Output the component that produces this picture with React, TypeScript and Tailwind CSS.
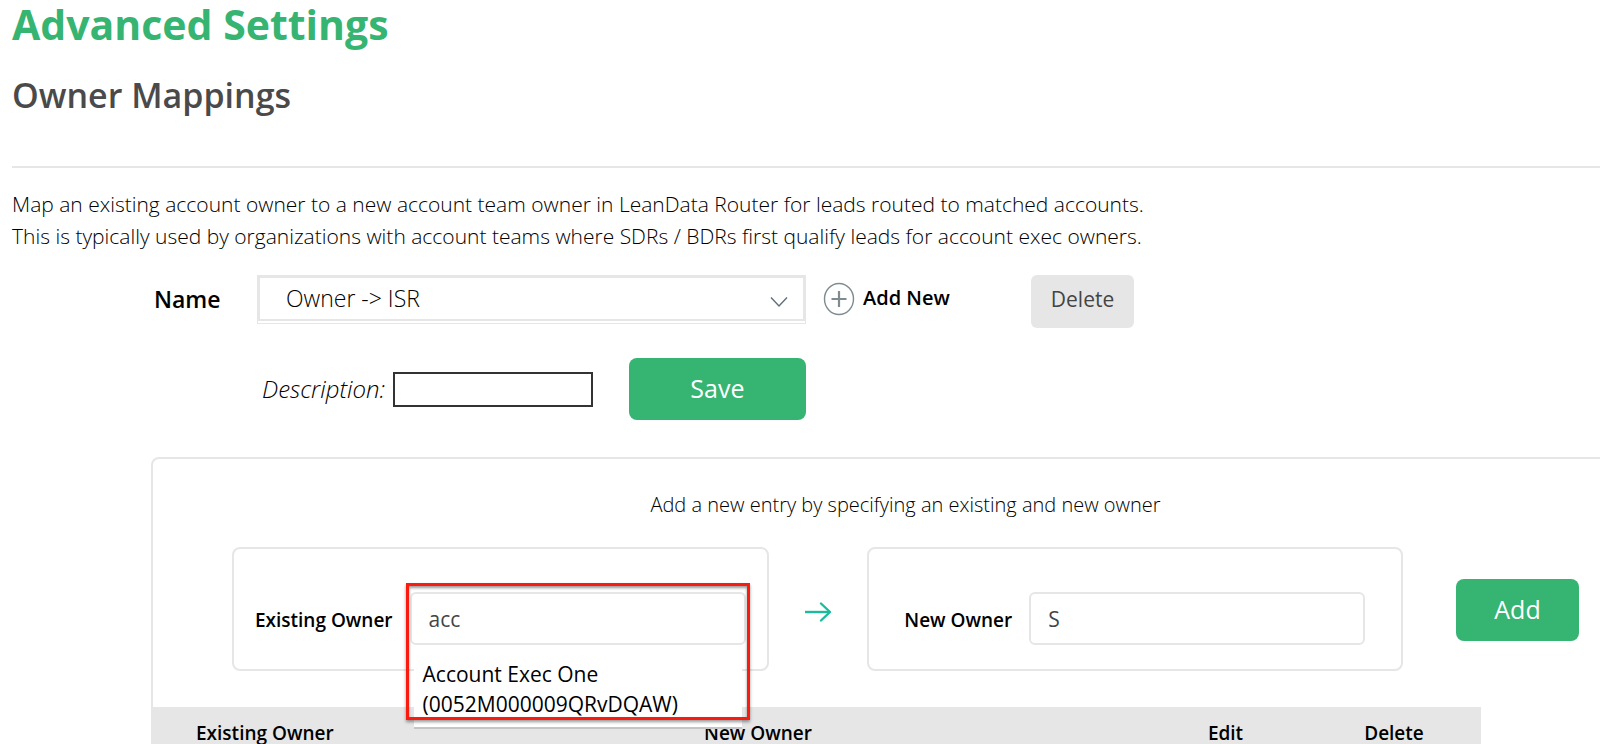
import { useState } from "react";

const NAMES = ["Owner -> ISR", "Owner -> SDR"];

function ChevronIcon() {
  return (
    <svg
      className="pointer-events-none absolute right-[17px] top-5"
      width="18"
      height="12"
      viewBox="0 0 18 12"
      fill="none"
      stroke="#5f6f7a"
      strokeWidth="1.4"
    >
      <path d="M1 1.5 9 10 17 1.5" />
    </svg>
  );
}

function PlusCircleIcon() {
  return (
    <svg className="shrink-0" width="32" height="34" viewBox="0 0 32 34" fill="none" stroke="#7f8b8f">
      <ellipse cx="16" cy="17" rx="14.5" ry="15.5" strokeWidth="1.4" />
      <path d="M16 9v16M8.5 17h15" strokeWidth="2.2" />
    </svg>
  );
}

function ArrowIcon() {
  return (
    <svg width="28" height="20" viewBox="0 0 28 20" fill="none" stroke="#1abc9c" strokeWidth="2.4">
      <path d="M1 10h25" />
      <path d="M17 1.5 26 10l-9 8.5" strokeLinecap="round" strokeLinejoin="round" />
    </svg>
  );
}

interface OwnerFieldProps {
  id: string;
  label: string;
  value: string;
  onChange: (value: string) => void;
  suggestion?: { name: string; id: string };
}

function OwnerField({ id, label, value, onChange, suggestion }: OwnerFieldProps) {
  return (
    <div className="flex h-[124px] min-w-0 flex-1 items-center justify-center gap-[17px] rounded-lg border-2 border-[#e6e6e6] pt-[18px]">
      <label htmlFor={id} className="pt-1 text-[19px] font-semibold whitespace-nowrap">
        {label}
      </label>
      <div className="relative w-[336px] min-w-0">
        <input
          id={id}
          type="text"
          autoComplete="off"
          value={value}
          onChange={(e) => onChange(e.target.value)}
          className="h-[53px] w-full rounded-md border-2 border-[#e6e6e6] px-[17px] pt-[2px] text-[21px] text-[#444] outline-none"
        />
        {suggestion && (
          <>
            {/* Autocomplete menu */}
            <ul className="absolute inset-x-1 top-full z-10 border-b-2 border-[#c4c4c4] bg-white pt-[14px] pb-2">
              <li>
                <button type="button" className="w-full px-[9px] text-left text-[21px] leading-[30px]">
                  {suggestion.name}
                  <br />({suggestion.id})
                </button>
              </li>
            </ul>
            {/* Highlight frame around the field and its menu */}
            <div className="pointer-events-none absolute -inset-x-1 -top-[9px] z-20 h-[137px] border-[3px] border-[#fb1a0e] shadow-[0_2px_3px_rgba(0,0,0,0.4),inset_0_2px_3px_rgba(0,0,0,0.4)]" />
          </>
        )}
      </div>
    </div>
  );
}

export default function App() {
  const [mapping, setMapping] = useState(NAMES[0]);
  const [description, setDescription] = useState("");
  const [existingOwner, setExistingOwner] = useState("acc");
  const [newOwner, setNewOwner] = useState("S");

  return (
    <main className="bg-white pl-3 font-['Open_Sans','Noto_Sans',sans-serif] text-black">
      <h1 className="text-[41px] leading-[48px] font-bold text-[#36b472]">Advanced Settings</h1>
      <h2 className="mt-6 text-[34px] leading-[46px] font-semibold text-[#4a4a4a]">Owner Mappings</h2>
      <hr className="mt-12 border-t-2 border-[#e6e6e6]" />

      <p className="mt-5 text-[21px] leading-8 font-light">
        Map an existing account owner to a new account team owner in LeanData Router for leads routed to matched accounts.
        <br />
        This is typically used by organizations with account teams where SDRs / BDRs first qualify leads for account exec owners.
      </p>

      <div className="mt-[23px] ml-[142px] flex h-[53px] items-start">
        <label htmlFor="mapping-name" className="w-[103px] pt-1 text-[23px] leading-[40px] font-semibold">
          Name
        </label>
        <div className="relative w-[549px] border border-[#e6e6e6] pb-[2px]">
          <select
            id="mapping-name"
            value={mapping}
            onChange={(e) => setMapping(e.target.value)}
            className="h-[45px] w-full appearance-none border-2 border-[#e6e6e6] bg-white px-[26px] text-[23px] font-light outline-none"
          >
            {NAMES.map((name) => (
              <option key={name}>{name}</option>
            ))}
          </select>
          <ChevronIcon />
        </div>
        <button type="button" className="ml-[17px] flex w-[125px] items-center gap-2 pt-[7px] text-[20px] font-semibold whitespace-nowrap">
          <PlusCircleIcon />
          <span className="pb-[2px]">Add New</span>
        </button>
        <button type="button" className="ml-[83px] h-[53px] w-[103px] rounded-md bg-[#e6e6e6] pb-1 text-[21px] text-[#444]">
          Delete
        </button>
      </div>

      <div className="mt-[30px] ml-[250px] flex items-center">
        <label htmlFor="description" className="mr-2 text-[24px] font-light italic">
          Description:
        </label>
        <input
          id="description"
          type="text"
          value={description}
          onChange={(e) => setDescription(e.target.value)}
          className="h-[35px] w-[200px] border-2 border-[#333] px-2 text-[20px] outline-none"
        />
        <button type="button" className="ml-9 h-[62px] w-[177px] rounded-lg bg-[#36b472] text-[25px] text-white">
          Save
        </button>
      </div>

      <section className="mt-[37px] ml-[139px] rounded-tl-lg border-t-2 border-l-2 border-[#e6e6e6]">
        <p className="mt-[30px] pr-[22px] pl-[80px] text-center text-[20px] leading-8 font-light">
          Add a new entry by specifying an existing and new owner
        </p>
        <div className="mt-[26px] flex items-center pr-[21px] pl-[79px]">
          <OwnerField
            id="existing-owner"
            label="Existing Owner"
            value={existingOwner}
            onChange={setExistingOwner}
            suggestion={{ name: "Account Exec One", id: "0052M000009QRvDQAW" }}
          />
          <div className="flex w-[98px] justify-center pt-[6px]">
            <ArrowIcon />
          </div>
          <OwnerField id="new-owner" label="New Owner" value={newOwner} onChange={setNewOwner} />
          <button type="button" className="mt-[2px] ml-[53px] h-[62px] w-[123px] rounded-lg bg-[#36b472] text-[25px] text-white">
            Add
          </button>
        </div>

        <div className="mt-9 pr-[119px]">
          <table className="w-full table-fixed bg-[#e6e6e6] text-[19px]">
            <thead>
              <tr className="h-[53px]">
                <th className="w-[508px] pl-[43px] text-left font-semibold">Existing Owner</th>
                <th className="pl-[43px] text-left font-semibold">New Owner</th>
                <th className="w-[163px] text-center font-semibold">Edit</th>
                <th className="w-[174px] text-center font-semibold">Delete</th>
              </tr>
            </thead>
          </table>
        </div>
      </section>
    </main>
  );
}
